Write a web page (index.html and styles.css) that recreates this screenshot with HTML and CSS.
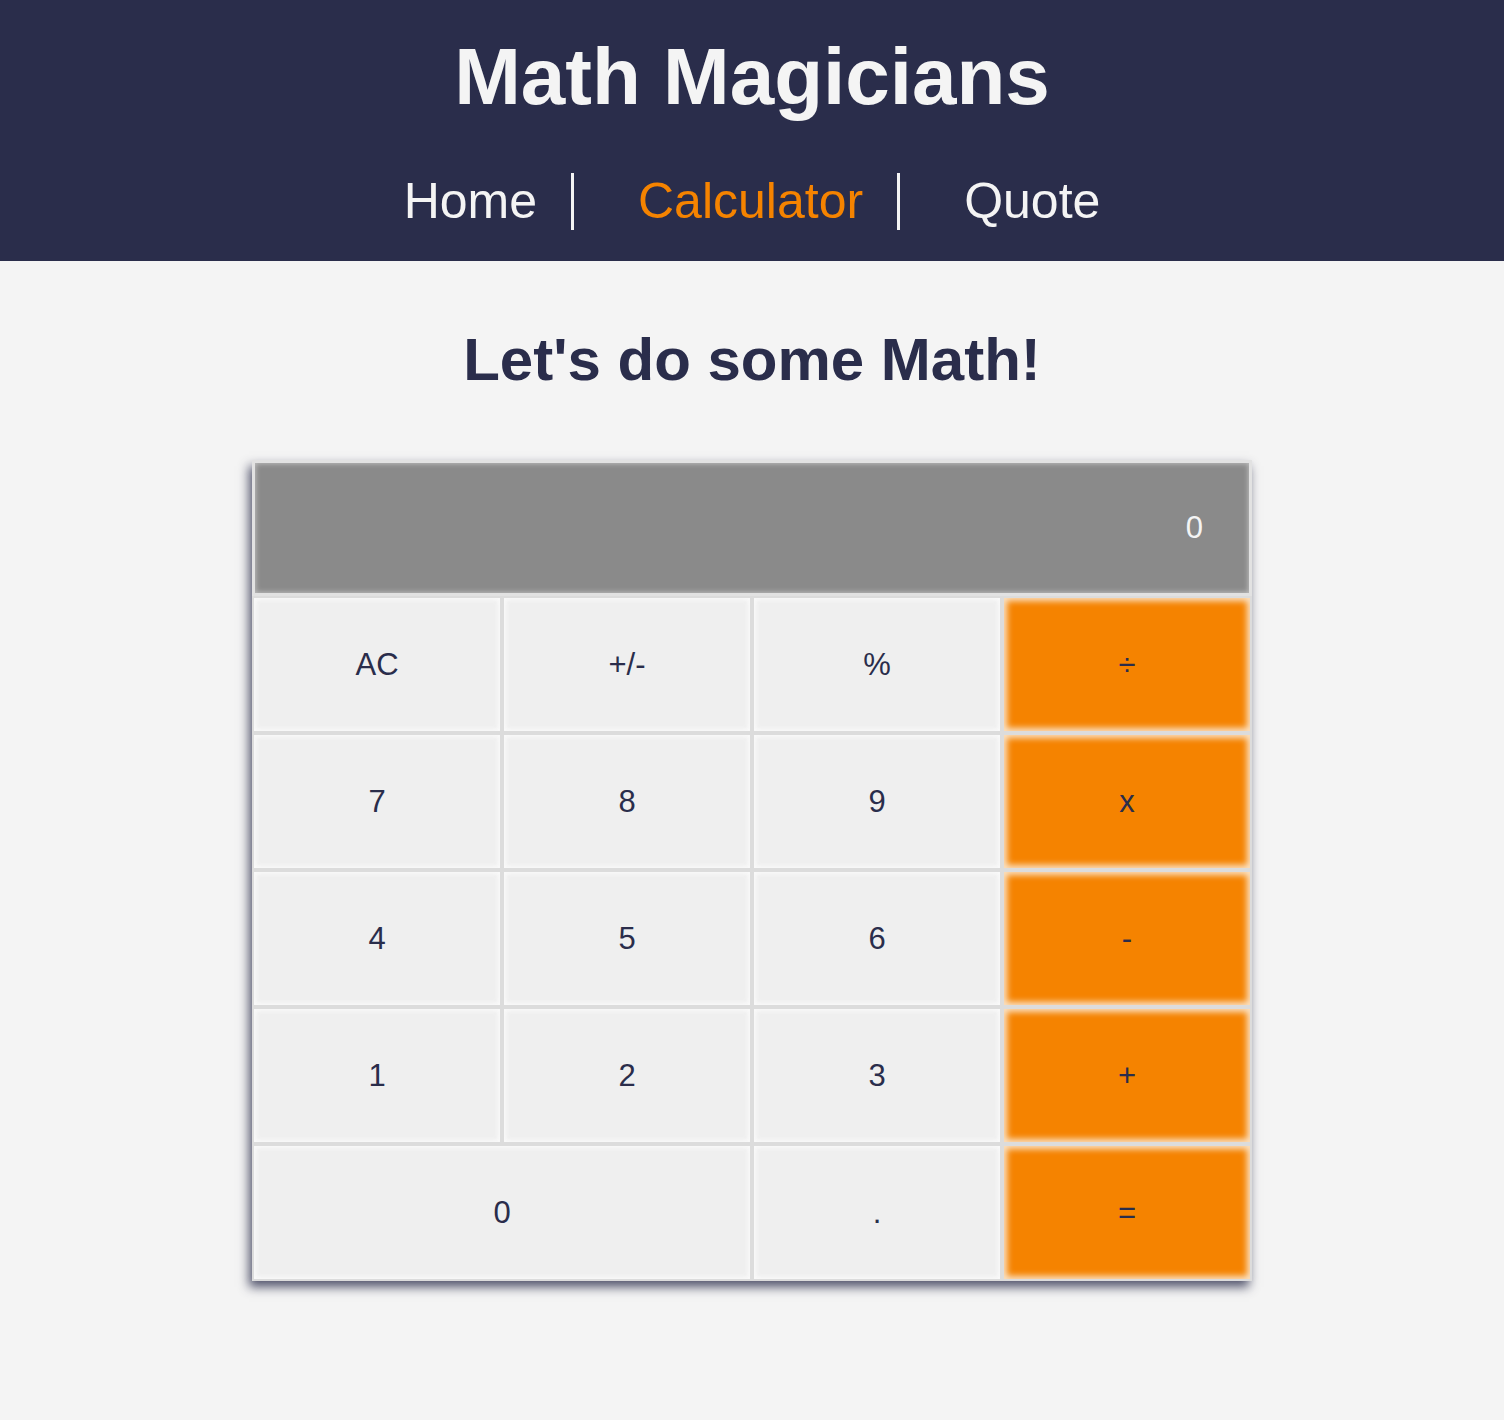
FILE: index.html
```html
<!DOCTYPE html>
<html lang="en">
<head>
<meta charset="utf-8">
<title>Math Magicians</title>
<link rel="stylesheet" href="styles.css">
</head>
<body>
<header class="site-header">
  <h1 class="site-title">Math Magicians</h1>
  <nav>
    <ul class="nav-list">
      <li class="nav-item"><a class="nav-link" href="#">Home</a></li>
      <li class="nav-item"><a class="nav-link active" href="#">Calculator</a></li>
      <li class="nav-item"><a class="nav-link" href="#">Quote</a></li>
    </ul>
  </nav>
</header>
<main class="main">
  <h2 class="page-title">Let's do some Math!</h2>
  <div class="calculator">
    <div class="display">0</div>
    <button class="key">AC</button>
    <button class="key">+/-</button>
    <button class="key">%</button>
    <button class="key op">÷</button>
    <button class="key">7</button>
    <button class="key">8</button>
    <button class="key">9</button>
    <button class="key op">x</button>
    <button class="key">4</button>
    <button class="key">5</button>
    <button class="key">6</button>
    <button class="key op">-</button>
    <button class="key">1</button>
    <button class="key">2</button>
    <button class="key">3</button>
    <button class="key op">+</button>
    <button class="key wide">0</button>
    <button class="key">.</button>
    <button class="key op">=</button>
  </div>
</main>
</body>
</html>
```

FILE: styles.css
```css
* { box-sizing: border-box; }

body {
  margin: 0;
  background: #f4f4f4;
  font-family: "Liberation Sans", Arial, sans-serif;
  color: #2a2d4b;
}

.site-header {
  background: #2a2d4b;
  padding: 31px 0 31px;
  text-align: center;
}

.site-title {
  margin: 0 0 50px;
  font-size: 80px;
  line-height: 92px;
  font-weight: 700;
  color: #f4f4f4;
}

.nav-list {
  list-style: none;
  margin: 0;
  padding: 0;
  display: flex;
  justify-content: center;
}

.nav-item {
  font-size: 50px;
  line-height: 57px;
  padding: 0 34px 0 64px;
  border-right: 3px solid #f4f4f4;
}

.nav-item:first-child { padding-left: 0; }
.nav-item:last-child { padding-right: 0; border-right: none; }

.nav-link {
  color: #f4f4f4;
  text-decoration: none;
}

.nav-link.active { color: #f58300; }

.main {
  padding: 64px 0 125px;
}

.page-title {
  margin: 0 0 66px;
  text-align: center;
  font-size: 60px;
  line-height: 69px;
  font-weight: 700;
  color: #2a2d4b;
}

.calculator {
  width: 1000px;
  margin: 0 auto;
  display: grid;
  grid-template-columns: repeat(4, 1fr);
  grid-template-rows: 136px repeat(5, 137px);
  background: #dadada;
  box-shadow: -3px 6px 10px rgba(42, 45, 75, 0.8);
}

.display {
  grid-column: 1 / -1;
  background: #8a8a8a;
  color: #f4f4f4;
  font-size: 31px;
  display: flex;
  align-items: center;
  justify-content: flex-end;
  padding-right: 46px;
  border: 3px solid #e2e2e2;
  box-shadow: inset 0 0 5px 1px #bcbcbc;
}

.key {
  font-family: "Liberation Sans", Arial, sans-serif;
  font-size: 31px;
  color: #2a2d4b;
  background: #efefef;
  border: 2px solid #dcdcdc;
  box-shadow: inset 0 0 4px 2px #fafafa;
  padding: 0;
  margin: 0;
}

.key.op {
  background: #f58300;
  box-shadow: inset 0 0 6px 3px #fbe3c6;
}

.key.wide {
  grid-column: span 2;
}
```
